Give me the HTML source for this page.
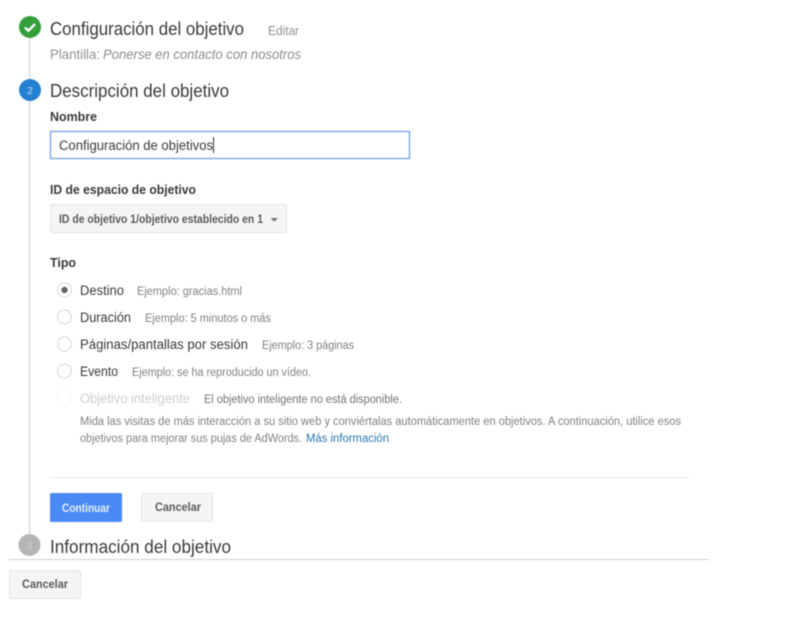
<!DOCTYPE html>
<html><head><meta charset="utf-8"><style>
html,body{margin:0;padding:0;background:#fff;width:786px;height:625px;overflow:hidden}
svg{display:block;filter:blur(.45px)}
text{font-family:"Liberation Sans",sans-serif}
.h{font-size:18px;fill:#3a3a3a}
.b{font-size:13px;font-weight:bold;fill:#3a3a3a}
.r{font-size:13.5px;fill:#3a3a3a}
.s{font-size:11.5px;fill:#808080}
.btn{font-size:12px;font-weight:bold;fill:#5a5a5a}
</style></head><body>
<svg width="786" height="625" viewBox="0 0 786 625" xmlns="http://www.w3.org/2000/svg">
<rect x="29" y="30" width="1.2" height="510" fill="#d2d2d2"/>
<circle cx="30" cy="27" r="11" fill="#34a03a"/>
<path d="M25 27.5l3.4 3.2 6.6-6.6" fill="none" stroke="#fff" stroke-width="2.4"/>
<circle cx="30" cy="90" r="11" fill="#2480d2"/>
<text x="30" y="94" font-size="10" fill="#cfe4f7" text-anchor="middle">2</text>
<circle cx="29.5" cy="545" r="11" fill="#b5b5b5"/>
<text x="29.5" y="549" font-size="10" fill="#d2d2d2" text-anchor="middle">3</text>

<text class="h" x="50" y="35" textLength="194" lengthAdjust="spacingAndGlyphs">Configuración del objetivo</text>
<text x="268" y="35" font-size="12.5" fill="#8f8f8f" textLength="31" lengthAdjust="spacingAndGlyphs">Editar</text>
<text x="50" y="59" font-size="13.5" fill="#919191" textLength="50" lengthAdjust="spacingAndGlyphs">Plantilla:</text>
<text x="103" y="59" font-size="13.5" font-style="italic" fill="#8c8c8c" textLength="198" lengthAdjust="spacingAndGlyphs">Ponerse en contacto con nosotros</text>
<text class="h" x="50" y="97" textLength="179" lengthAdjust="spacingAndGlyphs">Descripción del objetivo</text>
<text class="b" x="50" y="121" textLength="47" lengthAdjust="spacingAndGlyphs">Nombre</text>

<rect x="50.5" y="131.5" width="359" height="27" fill="#fff" stroke="#7ba6e6" stroke-width="1.4"/>
<text class="r" x="59" y="150" textLength="154" lengthAdjust="spacingAndGlyphs">Configuración de objetivos</text>
<rect x="213" y="137" width="1" height="16" fill="#333"/>

<text class="b" x="50" y="194" textLength="146" lengthAdjust="spacingAndGlyphs">ID de espacio de objetivo</text>
<rect x="50.5" y="204.5" width="236" height="28" rx="1.5" fill="#f5f5f5" stroke="#e4e4e4"/>
<text x="59" y="223" font-size="11.5" font-weight="bold" fill="#5a5a5a" textLength="204" lengthAdjust="spacingAndGlyphs">ID de objetivo 1/objetivo establecido en 1</text>
<path d="M270.5 218h7.5l-3.75 3.7z" fill="#777"/>

<text class="b" x="50" y="267" textLength="26" lengthAdjust="spacingAndGlyphs">Tipo</text>

<g fill="#fff" stroke="#d4d4d4">
<circle cx="64.5" cy="290" r="7"/>
<circle cx="64.5" cy="317" r="7"/>
<circle cx="64.5" cy="344" r="7"/>
<circle cx="64.5" cy="371" r="7"/>
<circle cx="64.5" cy="398" r="7" stroke="#f5f5f5"/>
</g>
<circle cx="64.5" cy="290" r="3.2" fill="#666"/>

<text class="r" x="80" y="295" textLength="44" lengthAdjust="spacingAndGlyphs">Destino</text>
<text class="s" x="137" y="295" textLength="105" lengthAdjust="spacingAndGlyphs">Ejemplo: gracias.html</text>
<text class="r" x="80" y="322" textLength="51" lengthAdjust="spacingAndGlyphs">Duración</text>
<text class="s" x="145" y="322" textLength="126" lengthAdjust="spacingAndGlyphs">Ejemplo: 5 minutos o más</text>
<text class="r" x="80" y="349" textLength="168" lengthAdjust="spacingAndGlyphs">Páginas/pantallas por sesión</text>
<text class="s" x="262" y="349" textLength="92" lengthAdjust="spacingAndGlyphs">Ejemplo: 3 páginas</text>
<text class="r" x="80" y="376" textLength="38" lengthAdjust="spacingAndGlyphs">Evento</text>
<text class="s" x="132" y="376" textLength="179" lengthAdjust="spacingAndGlyphs">Ejemplo: se ha reproducido un vídeo.</text>
<text x="80" y="403" font-size="13.5" fill="#cfcfcf" textLength="110" lengthAdjust="spacingAndGlyphs">Objetivo inteligente</text>
<text class="s" x="204" y="403" style="fill:#707070" textLength="198" lengthAdjust="spacingAndGlyphs">El objetivo inteligente no está disponible.</text>
<text class="s" x="80" y="425" textLength="601" lengthAdjust="spacingAndGlyphs">Mida las visitas de más interacción a su sitio web y conviértalas automáticamente en objetivos. A continuación, utilice esos</text>
<text class="s" x="80" y="442" textLength="222" lengthAdjust="spacingAndGlyphs">objetivos para mejorar sus pujas de AdWords.</text>
<text x="306" y="442" font-size="11.5" fill="#2a78ad" textLength="83" lengthAdjust="spacingAndGlyphs">Más información</text>

<rect x="50" y="477" width="639" height="1" fill="#e8e8e8"/>

<rect x="50" y="493" width="72" height="29" rx="1.5" fill="#4a8af5"/>
<text x="62" y="512" font-size="12" font-weight="bold" fill="#e3edfd" textLength="48" lengthAdjust="spacingAndGlyphs">Continuar</text>
<rect x="141.5" y="493.5" width="71" height="28" rx="1.5" fill="#f5f5f5" stroke="#e4e4e4"/>
<text class="btn" x="155" y="511" textLength="46" lengthAdjust="spacingAndGlyphs">Cancelar</text>

<text class="h" x="50" y="553" textLength="181" lengthAdjust="spacingAndGlyphs">Información del objetivo</text>
<rect x="9" y="559" width="700" height="1" fill="#d2d2d2"/>
<rect x="9.5" y="570.5" width="71" height="28" rx="1.5" fill="#f5f5f5" stroke="#e4e4e4"/>
<text class="btn" x="22" y="588" textLength="46" lengthAdjust="spacingAndGlyphs">Cancelar</text>
</svg>
</body></html>
